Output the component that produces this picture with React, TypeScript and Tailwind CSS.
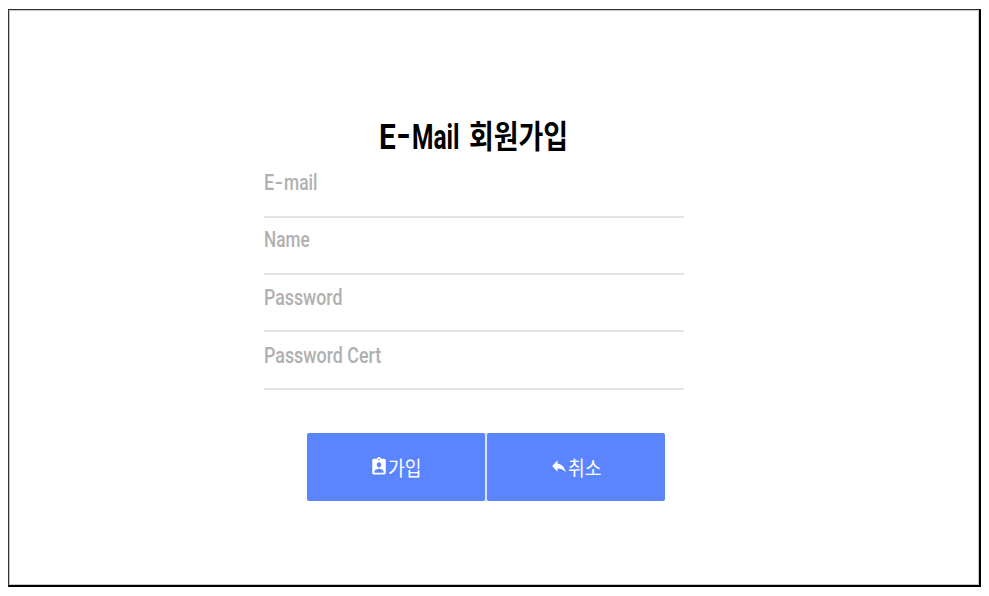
import type { ReactNode } from "react";
import { MdAssignmentInd, MdReply } from "react-icons/md";

function Field({ children, box }: { children: ReactNode; box: string }) {
  return (
    <div className={`flex border-b-2 border-[#e4e4e4] font-['Roboto','Liberation_Sans',sans-serif] text-[21.5px] leading-7 font-medium whitespace-nowrap text-[#b0b0b0] ${box}`}>
      {children}
    </div>
  );
}

function ActionButton({ icon, children }: { icon: ReactNode; children: string }) {
  return (
    <button className="flex h-[68px] w-[178px] items-center rounded-[2px] bg-[#5b84ff] pl-[63px] text-white">
      {icon}
      <span className="mt-[2px] block w-max origin-left scale-x-[0.91] font-['Noto_Sans_CJK_KR',sans-serif] text-[20px] leading-7 whitespace-nowrap">
        {children}
      </span>
    </button>
  );
}

export default function App() {
  return (
    <div className="h-[596px] w-[989px] bg-white pt-[9px] pl-2">
      <main className="h-[578px] w-[973px] border-t border-r-2 border-b-2 border-l border-black border-t-[#333] border-l-[#333] pt-[103px] pl-[255px] shadow-[inset_0_0_0_1px_#c8c8c8]">
        <h1 className="flex h-12 pl-[115px] text-[34px] leading-[48px] font-bold whitespace-nowrap text-black">
          <span className="mt-px flex w-[90px] font-['Roboto',sans-serif] text-[35px]">
            <span className="block w-[17px] origin-left scale-x-[0.85]">E</span>
            <span className="-mt-[2px] block w-[16px] origin-left scale-x-[1.1]">-</span>
            <span className="block w-[50px] origin-left scale-x-[0.7]">Mail</span>
          </span>
          <span className="-mt-[3px] block origin-left scale-x-[0.855] font-['Noto_Sans_CJK_KR',sans-serif] text-[31.5px]">회원가입</span>
        </h1>
        <form className="w-[420px]">
          <Field box="h-[57px] pt-2">
            <span className="block w-[11px] origin-left scale-x-[0.83]">E</span>
            <span className="block w-[9px] origin-left scale-x-[1.05]">-</span>
            <span className="block w-max origin-left scale-x-[0.81]">mail</span>
          </Field>
          <Field box="h-[57px] pt-2">
            <span className="block w-max origin-left scale-x-[0.8]">Name</span>
          </Field>
          <Field box="h-[57px] pt-[9px]">
            <span className="block w-max origin-left scale-x-[0.825]">Password</span>
          </Field>
          <Field box="h-[58px] pt-[10px]">
            <span className="block w-max origin-left scale-x-[0.83]">Password Cert</span>
          </Field>
        </form>
        <div className="mt-[43px] ml-[43px] flex w-[358px] gap-[2px] rounded-[2px] bg-[#dbe4ff]">
          <ActionButton icon={<MdAssignmentInd preserveAspectRatio="none" className="-mt-[2px] h-[21px] w-[18px]" />}>가입</ActionButton>
          <ActionButton icon={<MdReply preserveAspectRatio="none" className="-mt-[2px] h-[20px] w-[18px]" />}>취소</ActionButton>
        </div>
      </main>
    </div>
  );
}
